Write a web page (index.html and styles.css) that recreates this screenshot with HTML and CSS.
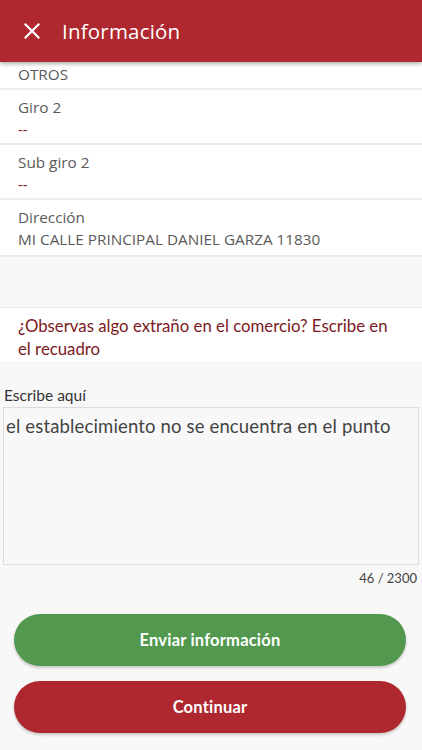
FILE: index.html
```html
<!DOCTYPE html>
<html lang="es">
<head>
<meta charset="utf-8">
<title>Información</title>
<link rel="stylesheet" href="styles.css">
</head>
<body>
<div class="screen">
  <header class="appbar">
    <svg class="close" viewBox="0 0 16 16" width="16" height="16">
      <path d="M1.5 1.5 L14.5 14.5 M14.5 1.5 L1.5 14.5" stroke="#fff" stroke-width="2.2" stroke-linecap="square" fill="none"/>
    </svg>
    <h1 class="title">Información</h1>
  </header>
  <main class="content">
    <div class="row row-top">
      <div class="value-plain">OTROS</div>
    </div>
    <div class="row">
      <div class="label">Giro 2</div>
      <div class="value-red">--</div>
    </div>
    <div class="row">
      <div class="label">Sub giro 2</div>
      <div class="value-red">--</div>
    </div>
    <div class="row row-last">
      <div class="label">Dirección</div>
      <div class="value-plain">MI CALLE PRINCIPAL DANIEL GARZA 11830</div>
    </div>
    <div class="spacer"></div>
    <div class="notice">¿Observas algo extraño en el comercio? Escribe en el recuadro</div>
    <section class="form">
      <div class="field-label">Escribe aquí</div>
      <div class="textarea">el establecimiento no se encuentra en el punto</div>
      <div class="counter">46 / 2300</div>
      <div class="actions">
        <button class="btn btn-green">Enviar información</button>
        <button class="btn btn-red">Continuar</button>
      </div>
    </section>
  </main>
</div>
</body>
</html>
```

FILE: styles.css
```css
* { box-sizing: border-box; }
html, body { margin: 0; padding: 0; }
body {
  width: 422px;
  height: 750px;
  overflow: hidden;
  background: #f8f8f8;
  font-family: "Open Sans", "Liberation Sans", sans-serif;
}
.screen { display: flex; flex-direction: column; height: 750px; position: relative; }
.appbar {
  height: 62px;
  background: #b0282f;
  display: flex;
  align-items: center;
  padding-left: 24px;
  gap: 22px;
  box-shadow: 0 2px 4px rgba(0,0,0,0.3);
  position: relative;
  z-index: 2;
  flex: none;
}
.close { display: block; }
.title {
  margin: 0;
  color: #fff;
  font-family: "Open Sans", sans-serif;
  font-weight: 400;
  font-size: 20.5px;
  letter-spacing: 0.2px;
}
.content { display: flex; flex-direction: column; flex: 1; }
.row {
  background: #fff;
  padding: 6px 18px 3px;
  border-bottom: 2px solid #ececec;
  display: flex;
  flex-direction: column;
}
.row-top { padding: 1px 18px 3px; height: 28px; }
.row-last { padding-bottom: 5px; }
.label, .value-plain {
  font-size: 15.3px;
  line-height: 22px;
  color: #5a5a5a;
  font-weight: 400;
}
.value-red {
  font-size: 15px;
  line-height: 22px;
  color: #8a1d25;
}
.spacer { height: 51px; background: #f8f8f8; border-bottom: 1px solid #e8e8e8; }
.notice {
  background: #fff;
  color: #7b1a22;
  font-family: "Lato", sans-serif;
  font-size: 16.8px;
  line-height: 23px;
  padding: 6px 30px 1px 18px;
}
.form { display: flex; flex-direction: column; padding: 0 3px; }
.field-label {
  font-family: "Lato", sans-serif;
  font-size: 15.5px;
  color: #333;
  margin-top: 24px;
  line-height: 20px;
  padding-left: 1px;
}
.textarea {
  margin-top: 2px;
  height: 158px;
  border: 1px solid #dcdcdc;
  background: #f8f8f8;
  font-family: "Lato", sans-serif;
  font-size: 18.5px;
  color: #444;
  padding: 6px 2px;
  line-height: 24px;
  letter-spacing: 0.15px;
}
.counter {
  text-align: right;
  font-family: "Lato", sans-serif;
  font-size: 13px;
  color: #444;
  padding-right: 2px;
  margin-top: 5px;
  line-height: 16px;
}
.actions {
  display: flex;
  flex-direction: column;
  gap: 15px;
  padding: 0 13px 0 11px;
  margin-top: 28px;
}
.btn {
  height: 52px;
  border: none;
  border-radius: 26px;
  color: #fff;
  font-family: "Lato", sans-serif;
  font-weight: 700;
  font-size: 16.5px;
  letter-spacing: 0.2px;
  box-shadow: 0 2px 3px rgba(0,0,0,0.2);
}
.btn-green { background: #52994f; }
.btn-red { background: #b0282f; }
```
